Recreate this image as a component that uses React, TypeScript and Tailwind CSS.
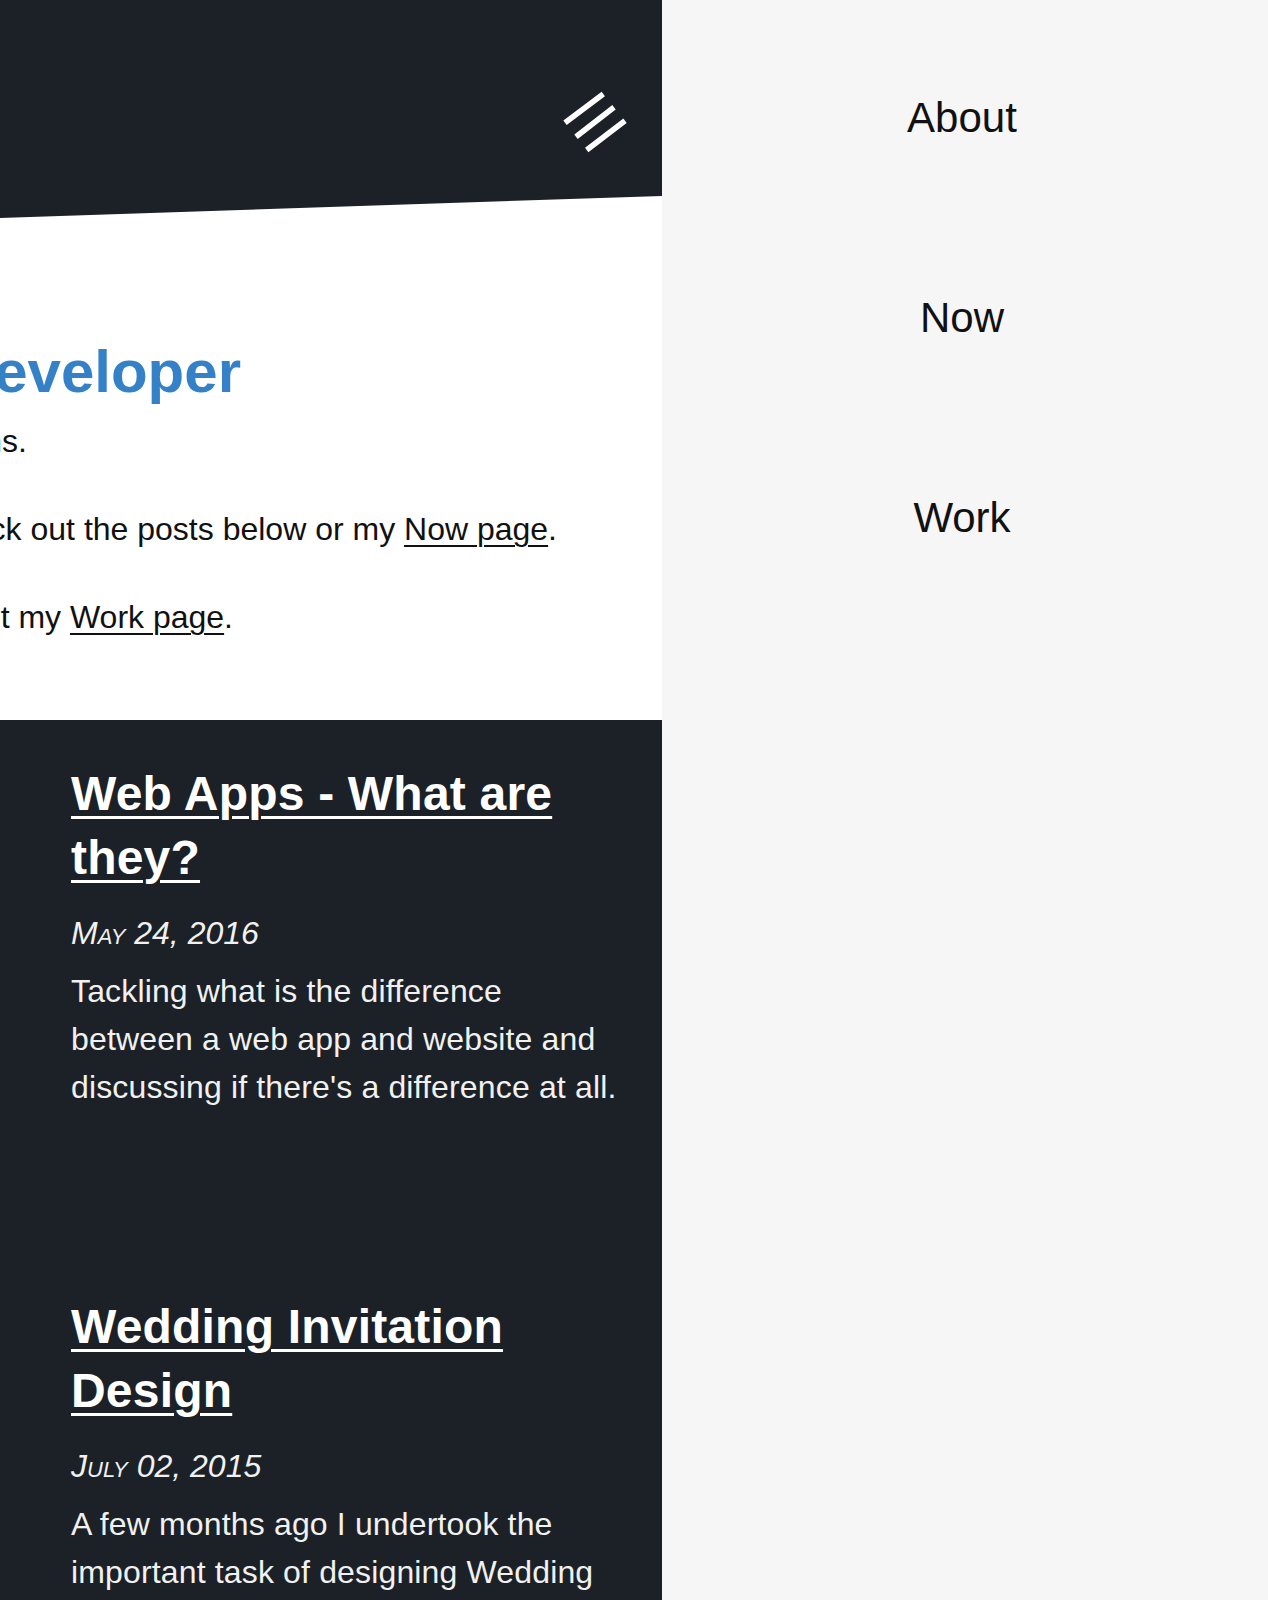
const posts = [
  {
    title: "Web Apps - What are they?",
    date: "May 24, 2016",
    excerpt:
      "Tackling what is the difference between a web app and website and discussing if there's a difference at all.",
  },
  {
    title: "Wedding Invitation Design",
    date: "July 02, 2015",
    excerpt:
      "A few months ago I undertook the important task of designing Wedding Invitations for my own wedding and learned a lot along the way.",
  },
];

const navLinks = ["About", "Now", "Work"];

const MenuIcon = () => (
  <svg width="64" height="64" viewBox="0 0 64 64" fill="none">
    <line x1="2" y1="32.7" x2="40.3" y2="4" stroke="white" strokeWidth="5.5" />
    <line x1="13" y1="46.7" x2="51" y2="17.3" stroke="white" strokeWidth="5.5" />
    <line x1="23.7" y1="60" x2="62" y2="30.7" stroke="white" strokeWidth="5.5" />
  </svg>
);

const App = () => {
  return (
    <div className="flex h-[1600px] overflow-hidden font-['Liberation_Sans',Arial,sans-serif]">
      {/* Main page, pushed left by the open menu */}
      <main className="w-[662px] shrink-0 overflow-hidden bg-white">
        <header className="flex h-[219px] justify-end bg-[#1c2127] pt-[90px] pr-[35px] [clip-path:polygon(0_0,100%_0,100%_196px,0_218px)]">
          <button className="h-16 w-16" aria-label="Menu">
            <MenuIcon />
          </button>
        </header>

        {/* Intro */}
        <section className="pb-[79px] text-[32px] leading-[48px] text-[#111]">
          <div className="mt-[117px] flex w-[241px] justify-end">
            <h1 className="whitespace-nowrap text-[60px] font-bold leading-[72px] text-[#3481c8]">
              Web Developer
            </h1>
          </div>
          <div className="mt-[9px] flex w-[27px] justify-end">
            <p className="whitespace-nowrap">I build websites and web applications.</p>
          </div>
          <div className="mt-[40px] flex w-[557px] justify-end">
            <p className="whitespace-nowrap">
              To see what I'm up to, check out the posts below or my{" "}
              <a href="#" className="underline decoration-2 underline-offset-[5px]">
                Now page
              </a>
              .
            </p>
          </div>
          <div className="mt-[40px] flex w-[233px] justify-end">
            <p className="whitespace-nowrap">
              To see what I've built, check out my{" "}
              <a href="#" className="underline decoration-2 underline-offset-[5px]">
                Work page
              </a>
              .
            </p>
          </div>
        </section>

        {/* Posts */}
        <section className="flex min-h-[900px] flex-col gap-[184px] bg-[#1c2127] pt-[42px] pl-[71px] pr-[39px] text-white">
          {posts.map((post) => (
            <article key={post.title} className="w-[552px]">
              <h2 className="text-[48px] font-bold leading-[64px] tracking-[0.2px]">
                <a href="#" className="underline decoration-[3px] underline-offset-[6px]">
                  {post.title}
                </a>
              </h2>
              <p className="mt-[19px] text-[32px] italic leading-[48px] text-[#f1f1f1] [font-variant-caps:small-caps]">
                {post.date}
              </p>
              <p className="mt-[10px] text-[32px] leading-[48px] tracking-[0.15px] text-[#f1f1f1]">
                {post.excerpt}
              </p>
            </article>
          ))}
        </section>
      </main>

      {/* Off-canvas menu */}
      <nav className="flex flex-1 flex-col items-center gap-[152px] bg-[#f6f6f6] pt-[94px] pr-[6px]">
        {navLinks.map((link) => (
          <a key={link} href="#" className="text-[42px] leading-[48px] text-[#111]">
            {link}
          </a>
        ))}
      </nav>
    </div>
  );
};

export default App;
